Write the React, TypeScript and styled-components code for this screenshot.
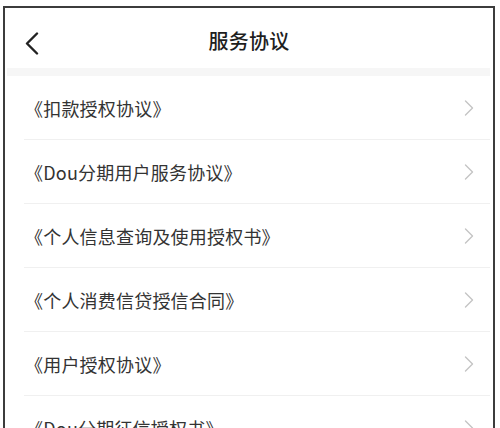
import * as React from 'react'
import styled, { createGlobalStyle } from 'styled-components'

const GlobalStyle = createGlobalStyle`
    html, body {
        margin: 0;
        padding: 0;
        background: #ffffff;
        overflow: hidden;
    }
    body {
        font-family: "Noto Sans CJK SC", "Noto Sans", sans-serif;
        color: #222;
    }
`

const Screen = styled.div`
    box-sizing: border-box;
    margin: 6px 0 0 3px;
    width: 492px;
    height: 440px;
    border: 2px solid #3c3c3c;
    border-bottom: none;
    background: #fff;
    display: flex;
    flex-direction: column;
`

const Header = styled.div`
    position: relative;
    height: 60px;
    display: flex;
    align-items: center;
    justify-content: center;
    flex-shrink: 0;
`

const BackButton = styled.button`
    position: absolute;
    left: 19px;
    top: 23px;
    width: 16px;
    height: 24px;
    padding: 0;
    border: none;
    background: none;
    display: flex;
    align-items: center;
    justify-content: center;
`

const Title = styled.h1`
    margin: 0;
    font-size: 20px;
    font-weight: 500;
    color: #1e1e1e;
    letter-spacing: 0.2px;
    transform: translateY(2px);
`

const Gap = styled.div`
    height: 8px;
    margin: 0 3px 0 2px;
    background: #f6f6f6;
    flex-shrink: 0;
`

const List = styled.ul`
    list-style: none;
    margin: 0;
    padding: 0;
`

const Row = styled.li`
    height: 64px;
    margin-left: 19px;
    margin-right: 3px;
    padding: 0 16px 0 1px;
    box-sizing: border-box;
    display: flex;
    align-items: center;
    justify-content: space-between;
    border-bottom: 1px solid #f0f0f0;
`

const Label = styled.span`
    font-size: 18px;
    color: #333;
    letter-spacing: 0.2px;
    white-space: nowrap;
`

const Chevron = () => (
    <svg width="10" height="16" viewBox="0 0 10 16" fill="none">
        <path d="M1.5 1 L8.5 8 L1.5 15" stroke="#c4c4c4" strokeWidth="1.4" strokeLinecap="round" strokeLinejoin="round" />
    </svg>
)

const BackIcon = () => (
    <svg width="14" height="23" viewBox="0 0 14 23" fill="none">
        <path d="M12 1.5 L2 11.5 L12 21.5" stroke="#222" strokeWidth="2.4" strokeLinecap="round" strokeLinejoin="round" />
    </svg>
)

const agreements = [
    '《扣款授权协议》',
    '《Dou分期用户服务协议》',
    '《个人信息查询及使用授权书》',
    '《个人消费信贷授信合同》',
    '《用户授权协议》',
    '《Dou分期征信授权书》',
]

const App: React.FunctionComponent = () => (
    <>
        <GlobalStyle />
        <Screen>
            <Header>
                <BackButton aria-label="返回">
                    <BackIcon />
                </BackButton>
                <Title>服务协议</Title>
            </Header>
            <Gap />
            <List>
                {agreements.map((name) => (
                    <Row key={name}>
                        <Label>{name}</Label>
                        <Chevron />
                    </Row>
                ))}
            </List>
        </Screen>
    </>
)

export default App
